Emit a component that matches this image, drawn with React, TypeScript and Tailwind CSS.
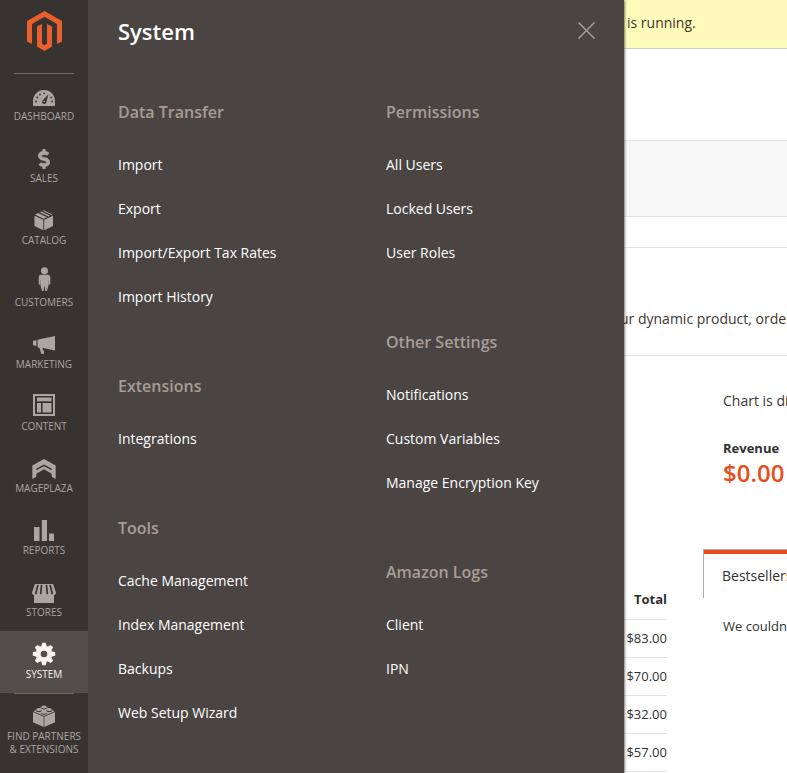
import type { ReactNode } from "react";
import { FaDollarSign } from "react-icons/fa";

type NavItem = { label: string; icon: ReactNode; active?: boolean; divided?: boolean };
type Group = { title: string; links: string[] };

function Glyph({ children }: { children: ReactNode }) {
  return (
    <svg viewBox="0 0 28 29" className="h-[29px] w-7" fill="currentColor" aria-hidden="true">
      {children}
    </svg>
  );
}

const DARK = "#373330";

const navItems: NavItem[] = [
  {
    label: "Dashboard",
    divided: true,
    icon: (
      <Glyph>
        <path d="M3 25v-4.500C3 13.500 8 9 14 9s11 4.500 11 11.500V25z" />
        <g fill={DARK}>
          <circle cx="6" cy="20.500" r="0.900" />
          <circle cx="7.200" cy="16.500" r="0.900" />
          <circle cx="10" cy="13.500" r="0.900" />
          <circle cx="14" cy="12.300" r="0.900" />
          <circle cx="21.200" cy="16.500" r="0.900" />
          <circle cx="22.200" cy="20.500" r="0.900" />
          <path d="M18.500 13l-2 7.600a2.200 2.200 0 1 1-3.400-1.600z" />
        </g>
        <circle cx="14.300" cy="20.500" r="0.800" />
      </Glyph>
    ),
  },
  {
    label: "Sales",
    icon: (
      <span className="flex h-[29px] items-center pt-[2px]">
        <FaDollarSign size={20} stroke="currentColor" strokeWidth={18} aria-hidden="true" />
      </span>
    ),
  },
  {
    label: "Catalog",
    icon: (
      <Glyph>
        <path d="M4.500 10.800l8.800 4v10.400l-8.800-4.300zM23 10.800l-8.800 4v10.400l8.800-4.300z" />
        <path d="M5 9.700l3.200-1.600 8.800 4.200-3.200 1.500zM9.800 7.300l1.500-.8 8.800 4.200-1.800.9zM12.800 5.800l1-.6 8.800 4.300-1.200.6z" />
      </Glyph>
    ),
  },
  {
    label: "Customers",
    icon: (
      <Glyph>
        <circle cx="14.500" cy="3.800" r="3.500" />
        <path d="M11.500 7.800h6c1.800 0 2.800 1.200 2.800 3v6.200c0 .8-1.500.8-1.500 0v-4h-.2v5l-1.700 6h-1.500l-.9-5.500-.9 5.500h-1.500l-1.700-6v-5h-.2v4c0 .8-1.500.8-1.500 0v-6.200c0-1.800 1-3 2.800-3z" />
      </Glyph>
    ),
  },
  {
    label: "Marketing",
    icon: (
      <Glyph>
        <path d="M3 11.700l3.500-.5v5.600L3 16.300zM7.500 10.700L25 7v14.500l-10.500-2.200-2-.3.500 2.500.8.100.3 3.200-2.700.2-1.900-6-1.900-.7z" />
      </Glyph>
    ),
  },
  {
    label: "Content",
    icon: (
      <Glyph>
        <path fillRule="evenodd" d="M3 3h22v22H3zM5 5v18h18V5z" />
        <path d="M7 6.500h14.500v3.800H7zM7 12h4v9.500H7zM12.500 12h9v9.500h-9z" />
      </Glyph>
    ),
  },
  {
    label: "Mageplaza",
    icon: (
      <Glyph>
        <path d="M2.300 12.600L14 6l11.700 6.600V26l-4-2.300v-3L14 16.300l-7.700 4.400v3L2.300 26z" />
        <path d="M6.300 17.300v-1.500L14 11.500l7.700 4.300v1.500L14 13.200z" fill={DARK} />
      </Glyph>
    ),
  },
  {
    label: "Reports",
    icon: (
      <Glyph>
        <path d="M4 12h5.500v14H4zM11.800 5H17v21h-5.200zM19 18.500h5V26h-5z" />
      </Glyph>
    ),
  },
  {
    label: "Stores",
    icon: (
      <Glyph>
        <path d="M5 7h18l3 8.500c0 1.500-1 2.500-2 2.500V26H4v-8c-1 0-2-1-2-2.500z" />
        <g stroke={DARK} strokeWidth="1.700" strokeLinecap="round">
          <path d="M7.800 8.500l-2 8M11.500 8.500l-.8 8M16.500 8.500l.8 8M20.200 8.500l2 8" />
        </g>
      </Glyph>
    ),
  },
  {
    label: "System",
    active: true,
    icon: (
      <Glyph>
        <g transform="translate(14 15)">
          <path
            fillRule="evenodd"
            d="M0-8.300a8.300 8.300 0 1 0 0 16.600a8.300 8.300 0 1 0 0-16.600zM0-3.300a3.300 3.300 0 1 1 0 6.600a3.300 3.300 0 1 1 0-6.600z"
          />
          {[0, 45, 90, 135, 180, 225, 270, 315].map((angle) => (
            <path key={angle} d="M-2.800-7.500L-1.700-11.200h3.400L2.800-7.500z" transform={`rotate(${angle})`} />
          ))}
        </g>
      </Glyph>
    ),
  },
  {
    label: "Find Partners & Extensions",
    divided: true,
    icon: (
      <Glyph>
        <path d="M3 11l10.700 4.700V26L3 21.300zM25 11l-10.700 4.700V26L25 21.300z" />
        <path d="M3.300 10.200L14 5l10.700 5.200L14 14.900z" />
        <g fill={DARK}>
          <ellipse cx="14" cy="7" rx="2.900" ry="1.400" />
          <ellipse cx="8.800" cy="9.700" rx="2.900" ry="1.400" />
          <ellipse cx="19.200" cy="9.700" rx="2.900" ry="1.400" />
          <ellipse cx="14" cy="12.300" rx="2.900" ry="1.400" />
        </g>
        <ellipse cx="14" cy="5.900" rx="2.800" ry="1.500" />
        <ellipse cx="8.800" cy="8.600" rx="2.800" ry="1.500" />
        <ellipse cx="19.200" cy="8.600" rx="2.800" ry="1.500" />
        <ellipse cx="14" cy="11.200" rx="2.800" ry="1.500" />
      </Glyph>
    ),
  },
];

const columns: Group[][] = [
  [
    { title: "Data Transfer", links: ["Import", "Export", "Import/Export Tax Rates", "Import History"] },
    { title: "Extensions", links: ["Integrations"] },
    { title: "Tools", links: ["Cache Management", "Index Management", "Backups", "Web Setup Wizard"] },
  ],
  [
    { title: "Permissions", links: ["All Users", "Locked Users", "User Roles"] },
    { title: "Other Settings", links: ["Notifications", "Custom Variables", "Manage Encryption Key"] },
    { title: "Amazon Logs", links: ["Client", "IPN"] },
  ],
];

const totals = ["$83.00", "$70.00", "$32.00", "$57.00"];

function Sidebar() {
  return (
    <nav aria-label="Main" className="z-20 w-[88px] shrink-0 bg-[#373330] text-[#aaa6a0]">
      <a href="#home" aria-label="Magento" className="flex h-[73px] justify-center pt-[11px]">
        <svg viewBox="0 0 35 40" className="h-10 w-[35px]" fill="#eb5f2d" aria-hidden="true">
          <path d="M17.500 0L35 10v20.500l-5 2.500V13L17.500 5.700 5 13v20l-5-2.500V10z" />
          <path d="M10 15.500l5-2.500v19.700l2.500 1.500 2.500-1.500V13l5 2.500v20L17.500 40 10 35.500z" />
        </svg>
      </a>
      <ul>
        {navItems.map((item) => (
          <li key={item.label}>
            <a
              href="#menu"
              className={
                item.active
                  ? "flex flex-col items-center bg-[#524e49] px-1 pb-3 text-center text-[#f7f3eb]"
                  : "flex flex-col items-center px-1 pb-3 text-center"
              }
            >
              <span
                className={
                  item.divided
                    ? "flex w-[60px] justify-center border-t border-[#736963] pt-[7px]"
                    : "flex w-[60px] justify-center pt-2"
                }
              >
                {item.icon}
              </span>
              <span className="text-[10px] leading-[13px] uppercase">{item.label}</span>
            </a>
          </li>
        ))}
      </ul>
    </nav>
  );
}

function SystemPanel() {
  return (
    <section
      aria-label="System"
      className="z-10 w-[536px] shrink-0 bg-[#4a4542] shadow-[0_0_3px_rgba(0,0,0,0.9)]"
    >
      <header className="flex h-[62px] items-center justify-between pr-[29px] pl-[30px]">
        <h2 className="text-[22px] leading-8 font-semibold text-white">System</h2>
        <button type="button" aria-label="Close" className="pb-0.5 text-[#a79d95]">
          <svg viewBox="0 0 17 17" className="size-[17px]" stroke="currentColor" strokeWidth="1.500" aria-hidden="true">
            <path d="M.5.500l16 16M16.500.500l-16 16" />
          </svg>
        </button>
      </header>
      <div className="grid grid-cols-2 pt-[39px]">
        {columns.map((groups) => (
          <div key={groups[0].title} className="flex flex-col gap-14 pl-[30px]">
            {groups.map((group) => (
              <div key={group.title}>
                <h3 className="mb-5 text-base leading-[22px] font-semibold text-[#a79d95]">{group.title}</h3>
                <ul>
                  {group.links.map((link) => (
                    <li key={link}>
                      <a href="#system" className="block py-3 text-sm leading-5 text-white">
                        {link}
                      </a>
                    </li>
                  ))}
                </ul>
              </div>
            ))}
          </div>
        ))}
      </div>
    </section>
  );
}

function Dashboard() {
  return (
    <main className="min-w-0 flex-1 overflow-hidden whitespace-nowrap text-[#41362f]">
      <p className="h-[49px] border-b border-[#cccccc] bg-[#fffbbb] pt-[13px] pl-[3px] text-sm leading-5">is running.</p>
      <div className="mt-[91px] h-[77px] border-y border-[#e3e3e3] bg-[#f8f8f8]" />
      <div className="mt-[30px] border-y border-[#e3e3e3] pt-[61px] pb-[26px]">
        <p className="-ml-1 text-sm leading-5">ur dynamic product, order, and customer reports</p>
      </div>
      <div className="flex items-start gap-9">
        <table className="mt-[225px] w-[43px] shrink-0 text-right text-[13px] leading-[19px] text-[#303030]">
          <thead>
            <tr>
              <th scope="col" className="border-b border-[#e3e3e3] pt-[9px] pb-[10px] text-right font-bold">
                Total
              </th>
            </tr>
          </thead>
          <tbody>
            {totals.map((total) => (
              <tr key={total}>
                <td className="border-b border-[#e3e3e3] py-[9px]">{total}</td>
              </tr>
            ))}
          </tbody>
        </table>
        <div className="min-w-0 flex-1">
          <p className="pt-[35px] pl-5 text-sm leading-5">Chart is disabled.</p>
          <dl className="mt-[27px] pl-5">
            <dt className="text-[13px] leading-5 font-bold text-[#303030]">Revenue</dt>
            <dd className="text-2xl leading-[30px] font-semibold text-[#e84e1a]">$0.00</dd>
          </dl>
          <div className="mt-[61px] border-t border-l border-[#adadad]">
            <button type="button" className="h-12 w-full border-t-4 border-[#e84e1a] pl-[18px] text-left text-sm leading-5 font-medium text-[#303030]">
              Bestsellers
            </button>
          </div>
          <p className="mt-[18px] pl-5 text-[13px] leading-5 text-[#303030]">We couldn't find any records.</p>
        </div>
      </div>
    </main>
  );
}

export default function App() {
  return (
    <div className="flex min-h-screen overflow-hidden bg-white font-['Open_Sans','Noto_Sans',sans-serif]">
      <Sidebar />
      <SystemPanel />
      <Dashboard />
    </div>
  );
}
